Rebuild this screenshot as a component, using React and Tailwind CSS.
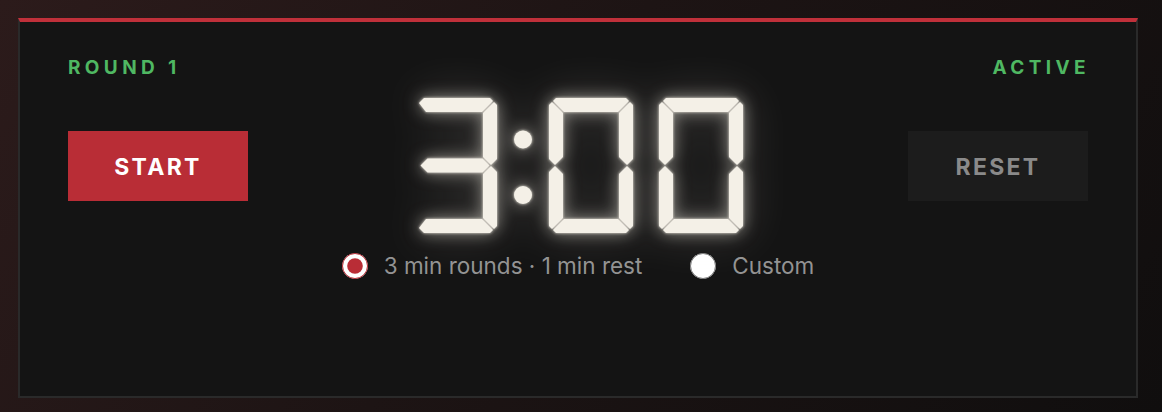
import React, { useState } from "react";

// seven segment shapes in a 84x135 box
const SEG = {
  a: "4,3 7,0 77,0 80,3 69,14 15,14",
  b: "84,7 81,4 70,15 70,59 78,67 84,61",
  c: "84,74 78,68 70,76 70,120 81,131 84,128",
  d: "4,132 7,135 77,135 80,132 69,121 15,121",
  e: "0,74 6,68 14,76 14,120 3,131 0,128",
  f: "0,7 3,4 14,15 14,59 6,67 0,61",
  g: "7.5,67.5 14.5,60.5 69.5,60.5 76.5,67.5 69.5,74.5 14.5,74.5",
  // horizontals with a free left end (no left verticals)
  a3: "6,5 11,0 77,0 80,3 69,14 13,14",
  d3: "6,130 11,135 77,135 80,132 69,121 13,121",
};

const DIGITS = {
  0: ["a", "b", "c", "d", "e", "f"],
  3: ["a3", "b", "c", "d3", "g"],
};

function Digit({ value, x }) {
  return (
    <g transform={`translate(${x} 0)`}>
      {DIGITS[value].map((s) => (
        <polygon key={s} points={SEG[s]} />
      ))}
    </g>
  );
}

function Clock() {
  return (
    <svg
      width="330"
      height="135"
      viewBox="0 0 330 135"
      className="overflow-visible [filter:drop-shadow(0_0_1.5px_rgba(255,250,238,0.9))_drop-shadow(0_0_8px_rgba(255,250,238,0.5))_drop-shadow(0_0_22px_rgba(255,250,238,0.2))]"
    >
      <g fill="#f4f0e7">
        <Digit value={3} x={0} />
        <circle cx="110" cy="41.5" r="9" />
        <circle cx="110" cy="97" r="9" />
        <Digit value={0} x={136} />
        <Digit value={0} x={246} />
      </g>
    </svg>
  );
}

export default function App() {
  const [mode, setMode] = useState("standard");

  return (
    <div className="w-[1162px] h-[412px] p-[18px] bg-[linear-gradient(125deg,#2c1b1b_0%,#1d1414_45%,#100e0e_100%)] font-['Inter',sans-serif]">
      <div className="w-[1120px] h-[380px] bg-[#141414] border-2 border-[#2a2a2a] border-t-4 border-t-[#c0303a] px-[48px] pt-[35px]">
        {/* header */}
        <div className="flex justify-between text-[19px] leading-[22px] font-bold tracking-[0.23em] text-[#4fb862]">
          <span>ROUND 1</span>
          <span className="-mr-[2px]">ACTIVE</span>
        </div>

        {/* controls + clock */}
        <div className="mt-[19px] flex items-center justify-between">
          <button className="w-[180px] h-[70px] pt-[4px] bg-[#b92d36] text-white text-[23px] font-bold tracking-[0.1em]">
            START
          </button>
          <Clock />
          <button className="w-[180px] h-[70px] pt-[4px] bg-[#1c1c1c] text-[#8a8a8a] text-[23px] font-bold tracking-[0.1em]">
            RESET
          </button>
        </div>

        {/* presets */}
        <div className="mt-[20px] flex justify-center items-center gap-[48px] text-[22.5px] leading-[26px] text-[#939393]">
          <label className="flex items-center gap-[16px]">
            <input
              type="radio"
              name="mode"
              checked={mode === "standard"}
              onChange={() => setMode("standard")}
              className="w-[26px] h-[26px] accent-[#b92d36]"
            />
            <span>3 min rounds · 1 min rest</span>
          </label>
          <label className="flex items-center gap-[16px]">
            <input
              type="radio"
              name="mode"
              checked={mode === "custom"}
              onChange={() => setMode("custom")}
              className="w-[26px] h-[26px] accent-[#b92d36]"
            />
            <span>Custom</span>
          </label>
        </div>
      </div>
    </div>
  );
}
